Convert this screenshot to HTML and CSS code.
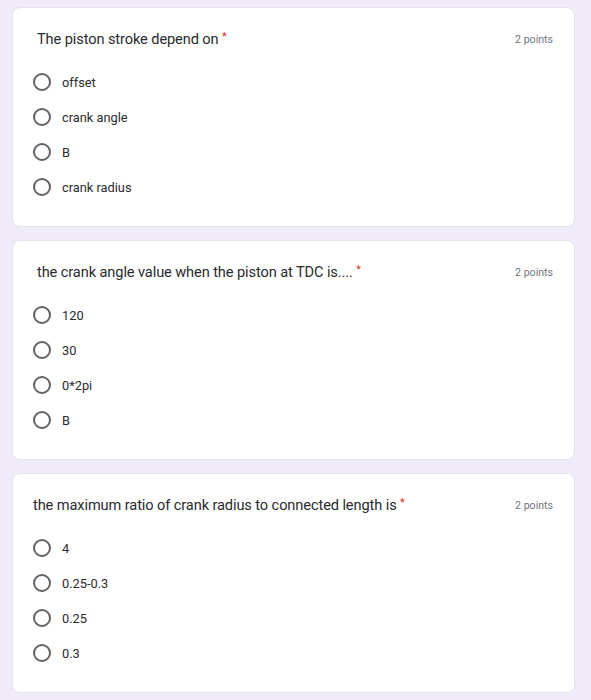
FILE: index.html
```html
<!DOCTYPE html>
<html>
<head>
<meta charset="utf-8">
<link rel="stylesheet" href="styles.css">
</head>
<body>
<div class="page">
  <div class="card">
    <div class="head">
      <div class="title">The piston stroke depend on <span class="req">*</span></div>
      <div class="points">2 points</div>
    </div>
    <div class="options">
      <div class="opt"><span class="radio"></span><span class="label">offset</span></div>
      <div class="opt"><span class="radio"></span><span class="label">crank angle</span></div>
      <div class="opt"><span class="radio"></span><span class="label">B</span></div>
      <div class="opt"><span class="radio"></span><span class="label">crank radius</span></div>
    </div>
  </div>
  <div class="card">
    <div class="head">
      <div class="title">the crank angle value when the piston at TDC is.... <span class="req">*</span></div>
      <div class="points">2 points</div>
    </div>
    <div class="options">
      <div class="opt"><span class="radio"></span><span class="label">120</span></div>
      <div class="opt"><span class="radio"></span><span class="label">30</span></div>
      <div class="opt"><span class="radio"></span><span class="label">0*2pi</span></div>
      <div class="opt"><span class="radio"></span><span class="label">B</span></div>
    </div>
  </div>
  <div class="card">
    <div class="head">
      <div class="title title-tight">the maximum ratio of crank radius to connected length is <span class="req">*</span></div>
      <div class="points">2 points</div>
    </div>
    <div class="options">
      <div class="opt"><span class="radio"></span><span class="label">4</span></div>
      <div class="opt"><span class="radio"></span><span class="label">0.25-0.3</span></div>
      <div class="opt"><span class="radio"></span><span class="label">0.25</span></div>
      <div class="opt"><span class="radio"></span><span class="label">0.3</span></div>
    </div>
  </div>
</div>
</body>
</html>
```
FILE: styles.css
```css
html, body {
  margin: 0;
  padding: 0;
  background: #f0ebf8;
  font-family: Roboto, "Liberation Sans", Arial, sans-serif;
  color: #202124;
}
.page {
  padding: 7px 16px 0 12px;
  display: flex;
  flex-direction: column;
  gap: 13px;
}
.card {
  box-sizing: border-box;
  height: 220px;
  background: #ffffff;
  border: 1px solid #e6e3ee;
  border-radius: 8px;
  padding: 18px 21px 0 20px;
}
.head {
  display: flex;
  justify-content: space-between;
  align-items: center;
  height: 24px;
}
.title {
  font-size: 14.6px;
  line-height: 24px;
  padding-left: 4px;
  letter-spacing: -0.1px;
  color: #2a2b2e;
}
.title-tight {
  padding-left: 0;
}
.req {
  color: #d93025;
  font-size: 11px;
  vertical-align: 4px;
}
.points {
  font-size: 10.6px;
  color: #70757a;
  margin-top: 2px;
}
.options {
  margin-top: 14.5px;
  display: flex;
  flex-direction: column;
}
.opt {
  height: 35px;
  display: flex;
  align-items: center;
  gap: 11px;
}
.radio {
  box-sizing: border-box;
  width: 18px;
  height: 18px;
  border: 2px solid #5f6368;
  border-radius: 50%;
  flex: none;
}
.label {
  font-size: 12.8px;
  color: #2a2b2e;
}
```
